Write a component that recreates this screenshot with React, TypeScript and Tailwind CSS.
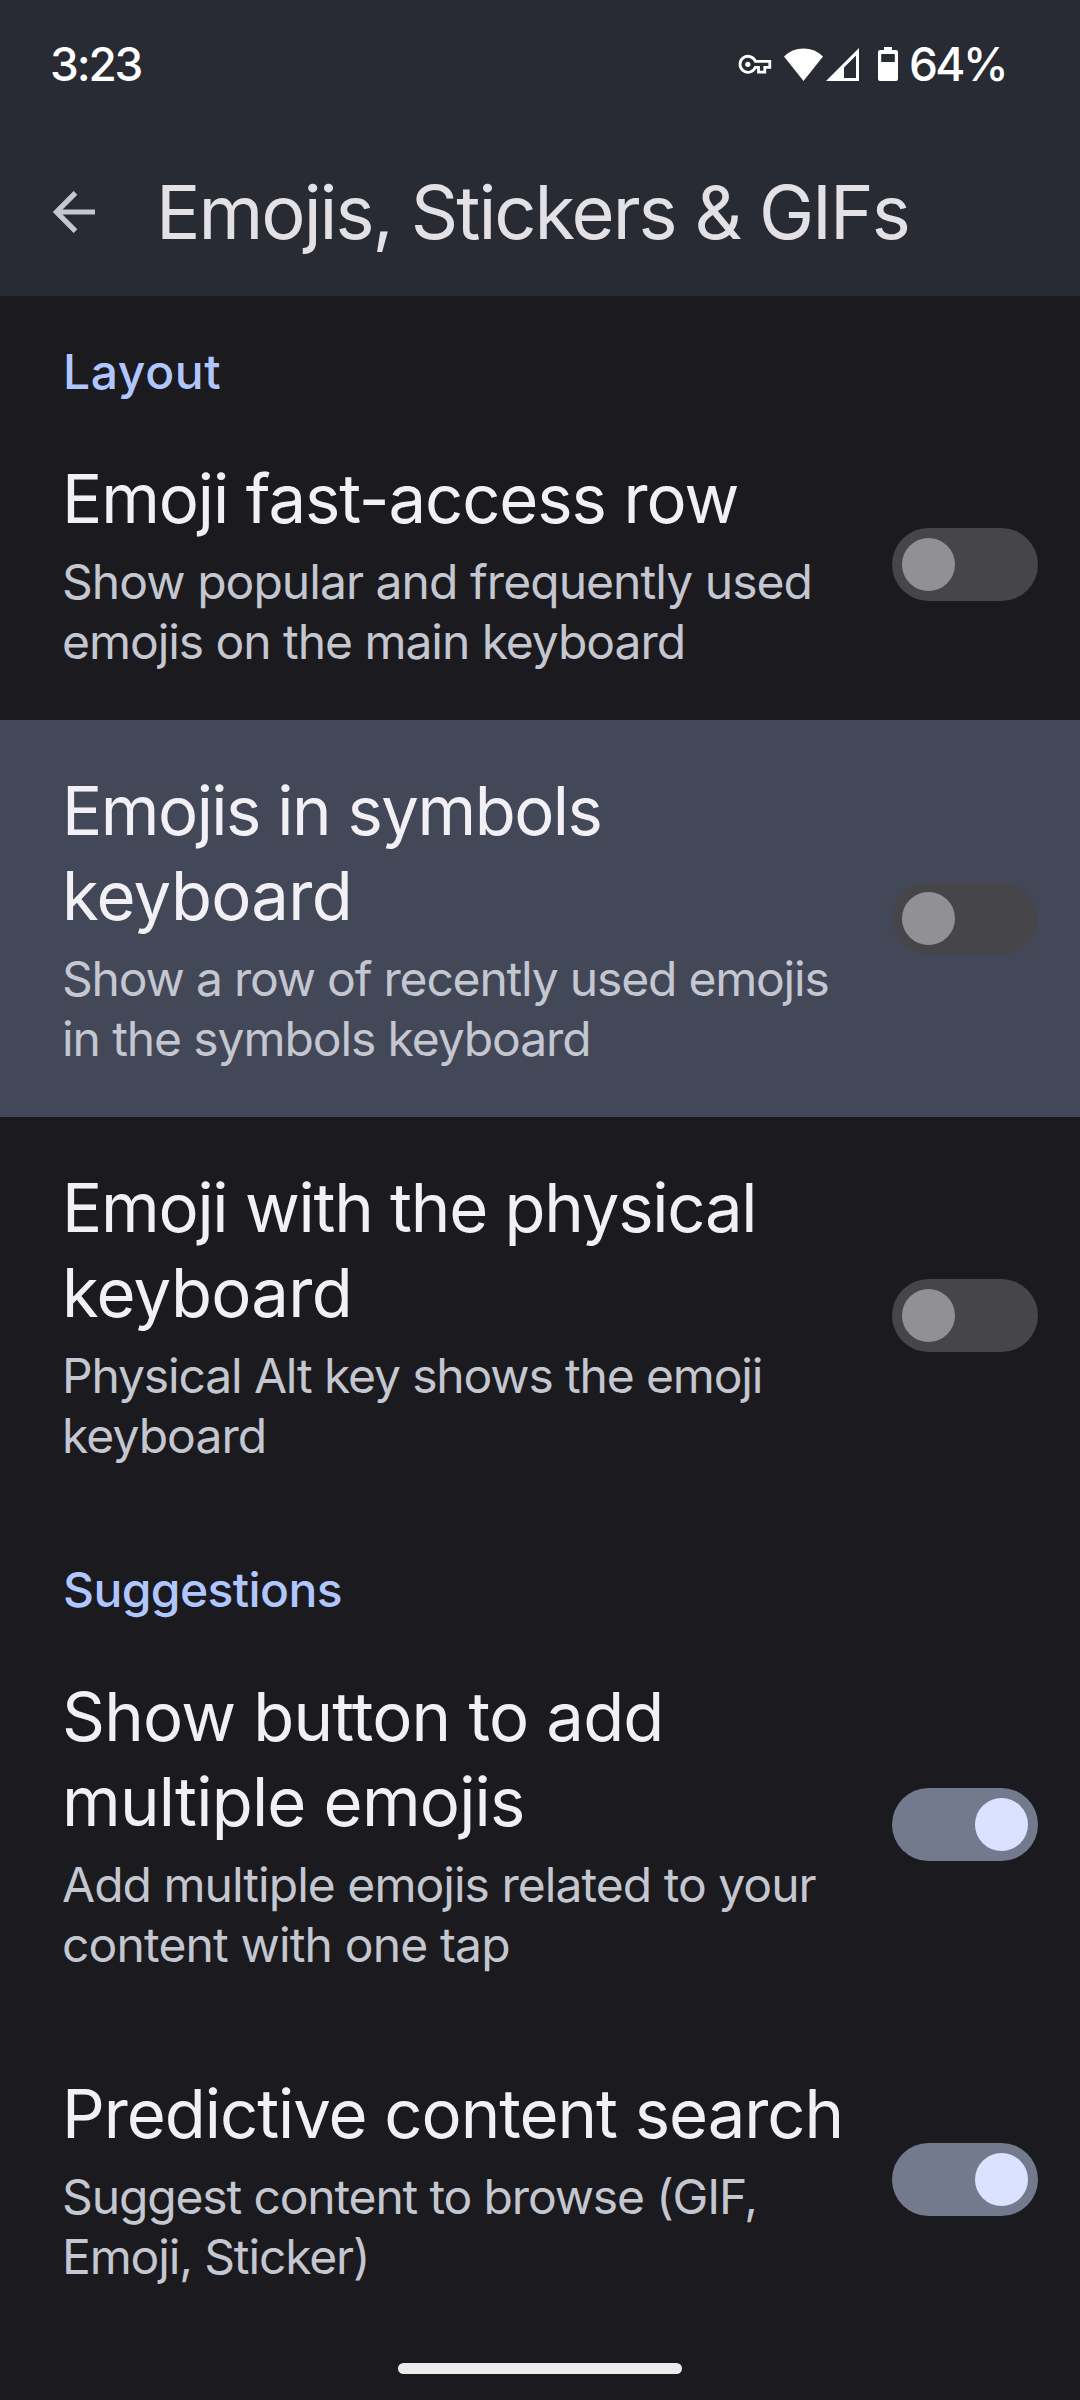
import type { FC } from 'react';

interface Line {
  text: string;
  tracking: string;
}

interface Setting {
  title: Line[];
  summary: Line[];
  on?: boolean;
  highlighted?: boolean;
}

const layout: Setting[] = [
  {
    title: [{ text: 'Emoji fast-access row', tracking: 'tracking-[-1.1px]' }],
    summary: [
      { text: 'Show popular and frequently used', tracking: 'tracking-[-0.95px]' },
      { text: 'emojis on the main keyboard', tracking: 'tracking-[-1.05px]' },
    ],
  },
  {
    title: [
      { text: 'Emojis in symbols', tracking: 'tracking-[-1.5px]' },
      { text: 'keyboard', tracking: 'tracking-[-0.7px]' },
    ],
    summary: [
      { text: 'Show a row of recently used emojis', tracking: 'tracking-[-1.2px]' },
      { text: 'in the symbols keyboard', tracking: 'tracking-[-1.1px]' },
    ],
    highlighted: true,
  },
  {
    title: [
      { text: 'Emoji with the physical', tracking: 'tracking-[-1.25px]' },
      { text: 'keyboard', tracking: 'tracking-[-0.7px]' },
    ],
    summary: [
      { text: 'Physical Alt key shows the emoji', tracking: 'tracking-[-1.15px]' },
      { text: 'keyboard', tracking: 'tracking-[-0.95px]' },
    ],
  },
];

const suggestions: Setting[] = [
  {
    title: [
      { text: 'Show button to add', tracking: 'tracking-[-0.8px]' },
      { text: 'multiple emojis', tracking: 'tracking-[-0.8px]' },
    ],
    summary: [
      { text: 'Add multiple emojis related to your', tracking: 'tracking-[-0.97px]' },
      { text: 'content with one tap', tracking: 'tracking-[-0.85px]' },
    ],
    on: true,
  },
  {
    title: [{ text: 'Predictive content search', tracking: 'tracking-[-1.05px]' }],
    summary: [
      { text: 'Suggest content to browse (GIF,', tracking: 'tracking-[-1.15px]' },
      { text: 'Emoji, Sticker)', tracking: 'tracking-[-1.15px]' },
    ],
    on: true,
  },
];

const Switch: FC<{ on?: boolean }> = ({ on }) => (
  <span
    role="switch"
    aria-checked={!!on}
    className={`flex h-[73px] w-[146px] shrink-0 items-center rounded-full px-[10px] ${
      on ? 'justify-end bg-[#737a8d]' : 'justify-start bg-[#464549]'
    }`}
  >
    <span
      className={`size-[53px] rounded-full ${on ? 'bg-[#dae2ff]' : 'bg-[#919095]'}`}
    />
  </span>
);

const SettingRow: FC<{ setting: Setting }> = ({ setting }) => (
  <div
    className={`flex shrink-0 items-center justify-between pr-[42px] pl-[62px] ${
      setting.highlighted ? 'bg-[#434858]' : ''
    }`}
  >
    <div className="pt-[48px] pb-[48px] whitespace-nowrap">
      <h3 className="text-[67px] leading-[85px] text-[#f2f0f4]">
        {setting.title.map((line) => (
          <span key={line.text} className={`block ${line.tracking}`}>
            {line.text}
          </span>
        ))}
      </h3>
      <p className="mt-[11px] text-[48px] leading-[60px] text-[#c4c6d0]">
        {setting.summary.map((line) => (
          <span key={line.text} className={`block ${line.tracking}`}>
            {line.text}
          </span>
        ))}
      </p>
    </div>
    <Switch on={setting.on} />
  </div>
);

const SectionLabel: FC<{ children: string; tracking: string }> = ({
  children,
  tracking,
}) => (
  <h2
    className={`h-[112px] shrink-0 pt-[46px] pl-[63px] text-[48px] leading-[60px] font-medium text-[#b0c6ff] ${tracking}`}
  >
    {children}
  </h2>
);

const StatusBar = () => (
  <div className="flex h-[128px] items-center justify-between pr-[74px] pl-[50px] text-[46px] font-medium text-white">
    <span className="tracking-[-2.2px]">3:23</span>
    <div className="flex items-center">
      <svg viewBox="0 0 34 21" className="mr-[12px] h-[21px] w-[34px]" fill="none" stroke="currentColor">
        <path d="M17.4 7.3A8 8 0 1 0 17.4 13.3H20.5V18.2H26.8V13.3H31.8V7.3Z" strokeWidth="2.8" />
        <circle cx="9.8" cy="10.3" r="2.6" fill="currentColor" stroke="none" />
      </svg>
      <svg viewBox="0 0 39 33" className="mr-[3px] h-[33px] w-[39px]" fill="currentColor">
        <path d="M0 8.5Q8 .5 19.5 .5T39 8.5L19.5 33Z" />
      </svg>
      <svg viewBox="0 0 33 33" className="mr-[19px] h-[33px] w-[33px]" fill="currentColor">
        <path fillRule="evenodd" d="M33 0V33H0ZM30 7.5L18 19.5V30H30Z" />
      </svg>
      <svg viewBox="0 0 20 34" className="mr-[11px] h-[34px] w-[20px]" fill="currentColor">
        <path fillRule="evenodd" d="M6 0H14V3H18Q20 3 20 5V32Q20 34 18 34H2Q0 34 0 32V5Q0 3 2 3H6ZM3.2 7V15H16.8V7Z" />
      </svg>
      <span className="tracking-[-2.6px]">64%</span>
    </div>
  </div>
);

const App = () => (
  <div className="relative flex h-[2400px] w-[1080px] flex-col overflow-hidden bg-[#1b1b1f] font-['Inter',sans-serif]">
    <header className="h-[296px] shrink-0 bg-[#282b33]">
      <StatusBar />
      <div className="flex h-[168px] items-center pl-[53px]">
        <svg viewBox="0 0 42 42" className="mr-[61px] size-[42px]" fill="none" stroke="#c4c6d0" strokeWidth="5.2">
          <path d="M22.5 1.8L3.5 21L22.5 40.2M3.5 21H42" />
        </svg>
        <h1 className="text-[74px] tracking-[-2px] whitespace-nowrap text-[#e4e1e6]">
          Emojis, Stickers &amp; GIFs
        </h1>
      </div>
    </header>
    <SectionLabel tracking="tracking-[0.6px]">Layout</SectionLabel>
    {layout.map((setting) => (
      <SettingRow key={setting.title[0].text} setting={setting} />
    ))}
    <SectionLabel tracking="tracking-[-0.6px]">Suggestions</SectionLabel>
    {suggestions.map((setting) => (
      <SettingRow key={setting.title[0].text} setting={setting} />
    ))}
    {/* next row, scrolled almost fully below the fold */}
    <h3 className="shrink-0 pt-[49px] pl-[62px] text-[67px] leading-[85px] tracking-[-1.2px] whitespace-nowrap text-[#f2f0f4]">
      Suggestions while typing
    </h3>
    <div className="absolute bottom-[26px] left-[398px] h-[11px] w-[284px] rounded-full bg-[#ececec]" />
  </div>
);

export default App;
